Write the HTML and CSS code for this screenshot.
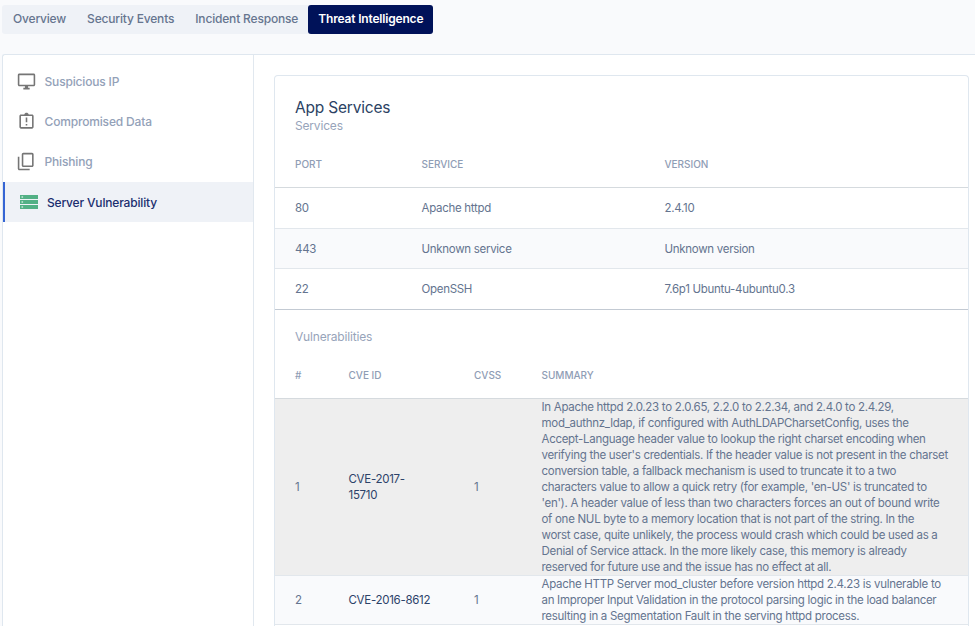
FILE: index.html
```html
<!DOCTYPE html>
<html lang="en">
<head>
<meta charset="utf-8">
<title>Threat Intelligence</title>
<link rel="stylesheet" href="styles.css">
</head>
<body>
<nav class="tabs">
  <a class="tab">Overview</a>
  <a class="tab">Security Events</a>
  <a class="tab">Incident Response</a>
  <a class="tab tab-active">Threat Intelligence</a>
</nav>
<div class="panel">
  <aside class="side">
    <a class="side-item">
      <svg class="icon" viewBox="0 0 24 24"><path d="M21 2H3c-1.100 0-2 .9-2 2v12c0 1.100.9 2 2 2h7v2H8v2h8v-2h-2v-2h7c1.100 0 2-.9 2-2V4c0-1.100-.9-2-2-2zm0 14H3V4h18v12z"/></svg>
      <span>Suspicious IP</span>
    </a>
    <a class="side-item">
      <svg class="icon" viewBox="0 0 24 24"><path d="M11 15h2v2h-2zM11 7h2v6h-2zM19 3h-4.180C14.400 1.840 13.300 1 12 1s-2.400.84-2.820 2H5c-1.100 0-2 .9-2 2v14c0 1.100.9 2 2 2h14c1.100 0 2-.9 2-2V5c0-1.100-.9-2-2-2zm0 16H5V5h14v14z"/></svg>
      <span>Compromised Data</span>
    </a>
    <a class="side-item">
      <svg class="icon" viewBox="0 0 24 24"><path d="M3 6H1v15c0 1.100.9 2 2 2h13v-2H3V6zM19 1H8C6.900 1 6 1.900 6 3v14c0 1.100.9 2 2 2h11c1.100 0 2-.9 2-2V3c0-1.100-.9-2-2-2zm0 16H8V3h11v14z"/></svg>
      <span>Phishing</span>
    </a>
    <a class="side-item side-active">
      <svg class="icon icon-server" viewBox="0 0 18 14"><path d="M0 0h18v4H0zM0 5h18v4H0zM0 10h18v4H0z"/><path class="led" d="M1.500 1.200h1.600v1.600H1.500zM1.500 6.200h1.600v1.600H1.500zM1.500 11.200h1.600v1.600H1.500z"/></svg>
      <span>Server Vulnerability</span>
    </a>
  </aside>
  <main class="content">
    <section class="card">
      <header class="card-head">
        <h1 class="title">App Services</h1>
        <p class="subtitle">Services</p>
      </header>
      <table class="table services">
        <colgroup><col class="c-port"><col class="c-service"><col></colgroup>
        <thead><tr><th>PORT</th><th>SERVICE</th><th>VERSION</th></tr></thead>
        <tbody>
          <tr><td>80</td><td>Apache httpd</td><td>2.4.10</td></tr>
          <tr class="alt"><td>443</td><td>Unknown service</td><td>Unknown version</td></tr>
          <tr><td>22</td><td>OpenSSH</td><td>7.6p1 Ubuntu-4ubuntu0.3</td></tr>
        </tbody>
      </table>
      <p class="subtitle vuln-title">Vulnerabilities</p>
      <table class="table vulns">
        <colgroup><col class="c-num"><col class="c-cve"><col class="c-cvss"><col></colgroup>
        <thead><tr><th>#</th><th>CVE ID</th><th>CVSS</th><th>SUMMARY</th></tr></thead>
        <tbody>
          <tr class="hover">
            <td>1</td><td class="cve">CVE-2017-<br>15710</td><td>1</td>
            <td class="summary">In Apache httpd 2.0.23 to 2.0.65, 2.2.0 to 2.2.34, and 2.4.0 to 2.4.29,<br>mod_authnz_ldap, if configured with AuthLDAPCharsetConfig, uses the<br>Accept-Language header value to lookup the right charset encoding when<br>verifying the user's credentials. If the header value is not present in the charset<br>conversion table, a fallback mechanism is used to truncate it to a two<br>characters value to allow a quick retry (for example, 'en-US' is truncated to<br>'en'). A header value of less than two characters forces an out of bound write<br>of one NUL byte to a memory location that is not part of the string. In the<br>worst case, quite unlikely, the process would crash which could be used as a<br>Denial of Service attack. In the more likely case, this memory is already<br>reserved for future use and the issue has no effect at all.</td>
          </tr>
          <tr class="alt">
            <td>2</td><td class="cve">CVE-2016-8612</td><td>1</td>
            <td class="summary">Apache HTTP Server mod_cluster before version httpd 2.4.23 is vulnerable to<br>an Improper Input Validation in the protocol parsing logic in the load balancer<br>resulting in a Segmentation Fault in the serving httpd process.</td>
          </tr>
        </tbody>
      </table>
    </section>
  </main>
</div>
</body>
</html>
```
FILE: styles.css
```css
* { box-sizing: border-box; }
body {
  margin: 0;
  height: 626px;
  padding: 5px 0 0 2px;
  overflow: hidden;
  background: #f9fafc;
  font-family: Inter, "Liberation Sans", sans-serif;
  font-size: 11.500px;
  letter-spacing: -.29px;
  color: #64748f;
}
h1, p { margin: 0; }
.tabs {
  display: flex;
  width: 431px;
  height: 29px;
  background: #eff2f7;
  border-radius: 3px;
}
.tab {
  padding-left: 11px;
  margin-right: 10px;
  line-height: 28px;
  font-size: 12px;
  font-weight: 500;
  letter-spacing: -.175px;
  white-space: nowrap;
  color: #66758f;
}
.tab-active {
  flex: 1;
  margin: 0;
  padding-left: 10px;
  background: #001259;
  border-radius: 3px;
  color: #fff;
  font-weight: 600;
}
.panel {
  display: flex;
  height: 572px;
  overflow: hidden;
  margin-top: 20px;
  background: #fff;
  border: 1px solid #dfe7ef;
  border-width: 1px 0 0 1px;
  border-top-left-radius: 3px;
}
.side {
  width: 251px;
  padding-top: 7px;
  border-right: 1px solid #e1e8ef;
}
.side-item {
  display: flex;
  align-items: center;
  gap: 8.500px;
  height: 40px;
  padding: 0 0 1px 14px;
  font-size: 12px;
  font-weight: 500;
  letter-spacing: -.17px;
  color: #93a1b8;
}
.icon { width: 19px; height: 19px; fill: #757575; }
.side-active {
  padding: 0 0 0 15px;
  gap: 9px;
  background: #eff2f7;
  border-left: 2px solid #3565d4;
  color: #1b2e6f;
}
.icon-server { width: 18px; height: 14px; fill: #52b085; }
.led { fill: #c8e8d8; }
.content { flex: 1; padding: 20px 6px 0 20px; }
.card {
  height: 551px;
  border: 1px solid #dfe7ef;
  border-bottom: 0;
  border-radius: 4px 4px 0 0;
}
.card-head { height: 67px; padding: 22px 20px 0; }
.title { font-size: 15.500px; line-height: 20px; font-weight: 400; letter-spacing: -.2px; color: #2b4263; }
.subtitle { font-size: 12px; line-height: 16px; letter-spacing: -.18px; color: #97a4ba; }
.table { width: 100%; table-layout: fixed; border-collapse: separate; border-spacing: 0; }
.table th {
  padding: 0 0 0 20px;
  text-align: left;
  font-size: 10px;
  font-weight: 500;
  letter-spacing: -.02px;
  color: #8f9db5;
  border-bottom: 1px solid #d5dade;
}
.table td { padding: 0 0 0 20px; vertical-align: middle; white-space: nowrap; border-bottom: 1px solid #e2e7ec; }
.services { border-bottom: 1px solid #c3cad3; }
.services th { height: 45px; padding-bottom: 3px; }
.services td { height: 41px; padding-bottom: 1px; }
.services .alt td { height: 40px; padding-bottom: 0; }
.services tr:last-child td { height: 40px; border-bottom: 0; }
.c-port { width: 126.500px; }
.c-service { width: 243px; }
.vuln-title { padding: 19px 20px 0; height: 41px; }
.vulns th { height: 48px; }
.c-num { width: 53.500px; }
.c-cve { width: 125.500px; }
.c-cvss { width: 67.500px; }
.vulns td { line-height: 16px; }
.alt { background: #f9fafc; }
.hover { background: #eee; }
.table .cve { color: #2c4269; }
```
